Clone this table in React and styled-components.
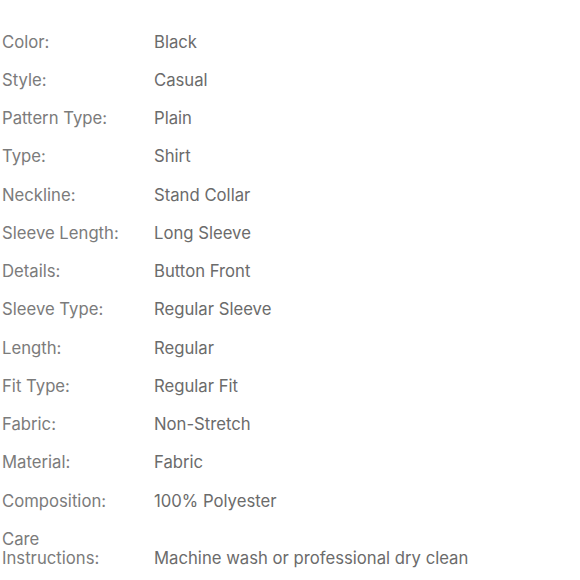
import React from "react";
import styled, { createGlobalStyle } from "styled-components";

const GlobalStyle = createGlobalStyle`
  html, body {
    margin: 0;
    padding: 0;
    background: #ffffff;
  }
  body {
    font-family: Inter, "Noto Sans", sans-serif;
    -webkit-font-smoothing: antialiased;
  }
`;

const Sheet = styled.div`
  display: flex;
  flex-direction: column;
  gap: 19.25px;
  padding: 32.5px 0 0 2px;
`;

const Row = styled.div`
  display: grid;
  grid-template-columns: 152px 1fr;
  align-items: end;
  font-size: 16.7px;
  line-height: 19px;
`;

const Label = styled.div`
  color: #7b7b7b;
`;

const Value = styled.div`
  color: #6b6b6b;
`;

const specs = [
  ["Color:", "Black"],
  ["Style:", "Casual"],
  ["Pattern Type:", "Plain"],
  ["Type:", "Shirt"],
  ["Neckline:", "Stand Collar"],
  ["Sleeve Length:", "Long Sleeve"],
  ["Details:", "Button Front"],
  ["Sleeve Type:", "Regular Sleeve"],
  ["Length:", "Regular"],
  ["Fit Type:", "Regular Fit"],
  ["Fabric:", "Non-Stretch"],
  ["Material:", "Fabric"],
  ["Composition:", "100% Polyester"],
  ["Care Instructions:", "Machine wash or professional dry clean"],
];

const App = () => {
  return (
    <>
      <GlobalStyle />
      <Sheet>
        {specs.map(([label, value]) => (
          <Row key={label}>
            <Label>
              {label === "Care Instructions:" ? (
                <>
                  Care
                  <br />
                  Instructions:
                </>
              ) : (
                label
              )}
            </Label>
            <Value>{value}</Value>
          </Row>
        ))}
      </Sheet>
    </>
  );
};

export default App;
